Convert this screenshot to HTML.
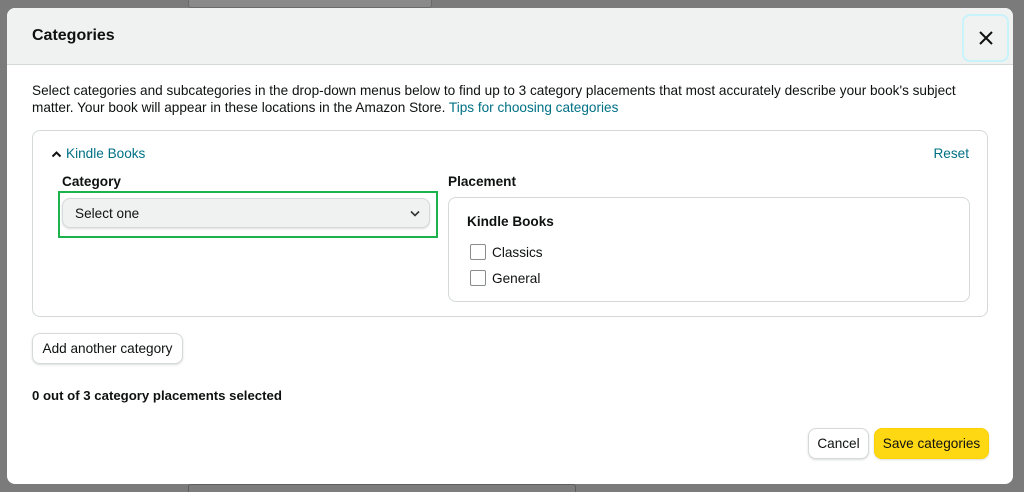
<!DOCTYPE html>
<html style="height:492px;overflow:hidden"><head><style>
*{box-sizing:border-box;margin:0;padding:0}
body{width:1024px;height:492px;background:#7b7b7b;font-family:"Liberation Sans",sans-serif;color:#0f1111;position:relative;overflow:hidden;font-size:13px}
.bgf{position:absolute;left:188px;top:-10px;width:244px;height:18px;background:#8a8a8a;border:1px solid #6a6a6a;border-radius:3px}
.bgf2{position:absolute;left:188px;top:484px;width:388px;height:20px;background:#7d7d7d;border:1px solid #5e5e5e;border-radius:3px}
.modal{position:absolute;left:7px;top:8px;width:1006px;height:476px;background:#fff;border-radius:8px;overflow:hidden}
.hdr{height:57px;background:#f0f2f2;border-bottom:1px solid #d5d9d9;position:relative}
.hdr h1{position:absolute;left:25px;top:19px;font-size:16px;font-weight:bold}
.x{position:absolute;left:955px;top:6px;width:47px;height:48px;border:2px solid #c8f3fa;border-radius:8px;display:flex;align-items:center;justify-content:center}
.desc{position:absolute;left:25px;top:74px;width:925px;line-height:17px;font-size:13.6px;color:#0f1111}
a{color:#007185;text-decoration:none}
.box{position:absolute;left:25px;top:122px;width:956px;height:187px;border:1px solid #d5d9d9;border-radius:8px}
.kb{position:absolute;left:18px;top:15px;font-size:13.6px}
.reset{position:absolute;right:18px;top:15px;font-size:13.6px}
.cat{position:absolute;left:29px;top:43px;font-weight:bold;font-size:13.6px}
.green{position:absolute;left:25px;top:60px;width:380px;height:47px;border:2px solid #1db34c}
.sel{position:absolute;left:29px;top:67px;width:368px;height:30px;background:#f0f2f2;border:1px solid #d5d9d9;border-radius:8px;box-shadow:0 1px 2px rgba(15,17,17,.15);padding:7px 12px;font-size:13.6px}
.pl{position:absolute;left:415px;top:43px;font-weight:bold;font-size:13.6px}
.pbox{position:absolute;left:415px;top:66px;width:522px;height:105px;border:1px solid #d5d9d9;border-radius:8px}
.pbox b{position:absolute;left:18px;top:16px;font-size:13.6px}
.cb{position:absolute;left:21px;width:16px;height:16px;border:1px solid #888c8c;border-radius:2px}
.cl{position:absolute;left:43px;font-size:13.6px}
.btn{position:absolute;background:#fff;border:1px solid #d5d9d9;border-radius:8px;box-shadow:0 1px 2px rgba(15,17,17,.15);font-size:13.6px;text-align:center}
</style></head><body>
<div class="bgf"></div><div class="bgf2"></div>
<div class="modal">
<div class="hdr"><h1>Categories</h1>
<div class="x"><svg width="14" height="14" viewBox="0 0 14 14"><path d="M1 1L13 13M13 1L1 13" stroke="#0f1111" stroke-width="2"/></svg></div></div>
<div class="desc">Select categories and subcategories in the drop-down menus below to find up to 3 category placements that most accurately describe your book's subject matter. Your book will appear in these locations in the Amazon Store. <a>Tips for choosing categories</a></div>
<div class="box">
<div class="kb"><svg width="11" height="8" viewBox="0 0 11 8" style="margin-right:4px"><path d="M1.5 6.5L5.5 2.5L9.5 6.5" stroke="#0f1111" stroke-width="2" fill="none"/></svg><a>Kindle Books</a></div>
<div class="reset"><a>Reset</a></div>
<div class="cat">Category</div>
<div class="green"></div>
<div class="sel">Select one<svg width="10" height="7" viewBox="0 0 10 7" style="position:absolute;right:9px;top:11px"><path d="M1 1.5L5 5.5L9 1.5" stroke="#333" stroke-width="1.6" fill="none"/></svg></div>
<div class="pl">Placement</div>
<div class="pbox"><b>Kindle Books</b>
<div class="cb" style="top:46px"></div><div class="cl" style="top:47px">Classics</div>
<div class="cb" style="top:72px"></div><div class="cl" style="top:73px">General</div></div>
</div>
<div class="btn" style="left:25px;top:325px;width:151px;height:31px;line-height:29px">Add another category</div>
<div style="position:absolute;left:25px;top:380px;font-weight:bold;font-size:13.2px">0 out of 3 category placements selected</div>
<div class="btn" style="left:801px;top:420px;width:61px;height:31px;line-height:29px">Cancel</div>
<div class="btn" style="left:867px;top:420px;width:115px;height:31px;line-height:29px;background:#ffd814;border-color:#fcd200">Save categories</div>
</div>
</body></html>
